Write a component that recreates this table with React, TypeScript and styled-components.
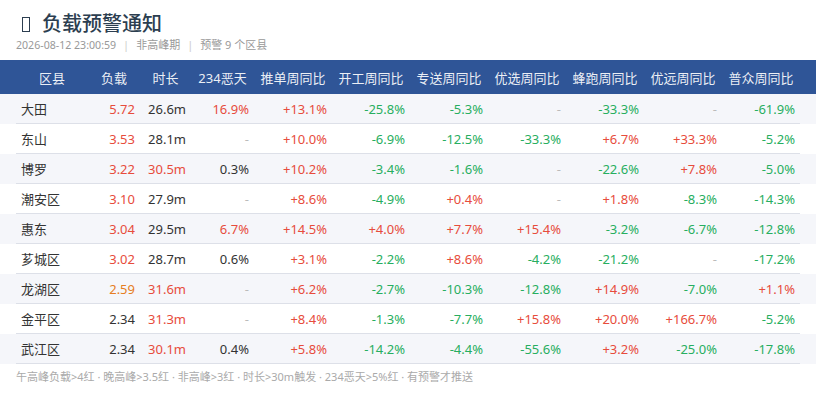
import React from 'react';
import styled, { createGlobalStyle } from 'styled-components';

const GlobalStyle = createGlobalStyle`
  * {
    box-sizing: border-box;
  }
  body {
    margin: 0;
    background: #ffffff;
    font-family: 'Noto Sans', 'Noto Sans CJK SC', sans-serif;
    color: #333333;
  }
`;

// column template shared by header and rows
const COLUMNS = '72px 52px 51px 63px repeat(7, 78px)';

const Page = styled.div`
  width: 816px;
  padding-top: 10px;
`;

const TitleBlock = styled.div`
  padding: 0 16px;
  margin-bottom: 8px;
`;

const Title = styled.h1`
  margin: 0;
  display: flex;
  align-items: center;
  gap: 12px;
  padding-left: 6px;
  font-size: 20px;
  line-height: 28px;
  font-weight: 500;
  color: #2c3e50;
`;

// missing-glyph box in front of the title
const TitleGlyph = styled.span`
  display: inline-block;
  width: 8px;
  height: 15px;
  border: 1.5px solid #2c3e50;
`;

const Meta = styled.div`
  display: flex;
  align-items: center;
  gap: 6px;
  font-size: 11px;
  line-height: 14px;
  color: #999999;
`;

const MetaDate = styled.span`
  font-size: 10.6px;
`;

const MetaSep = styled.span`
  color: #cccccc;
  padding: 0 1px;
`;

const HeadBar = styled.div`
  background: #2f5597;
  height: 34px;
`;

const Grid = styled.div`
  display: grid;
  grid-template-columns: ${COLUMNS};
  margin: 0 16px;
  height: 100%;
  align-items: center;
`;

const HeadCell = styled.div`
  text-align: center;
  font-size: 13px;
  color: rgba(255, 255, 255, 0.92);
  white-space: nowrap;
`;

const Row = styled.div<{ $striped: boolean }>`
  height: 30px;
  background: ${p => (p.$striped ? '#f5f6fa' : '#ffffff')};
`;

const RowGrid = styled(Grid)`
  border-bottom: 1px solid #dde0e8;
`;

type Tone = 'red' | 'green' | 'orange' | 'plain' | 'dash';

const toneColor: Record<Tone, string> = {
  red: '#e74c3c',
  green: '#27ae60',
  orange: '#e67e22',
  plain: '#333333',
  dash: '#bbbbbb',
};

const Cell = styled.div<{ $tone: Tone; $left?: boolean }>`
  padding: 0 5px;
  font-size: 13px;
  text-align: ${p => (p.$left ? 'left' : 'right')};
  color: ${p => toneColor[p.$tone]};
  white-space: nowrap;
`;

const Footer = styled.div`
  padding: 5px 16px 0;
  font-size: 11px;
  line-height: 16px;
  color: #aaaaaa;
`;

const headers = ['区县', '负载', '时长', '234恶天', '推单周同比', '开工周同比', '专送周同比', '优选周同比', '蜂跑周同比', '优远周同比', '普众周同比'];

type District = {
  name: string;
  load: number;
  minutes: number;
  bad: string;
  ratios: string[];
};

const districts: District[] = [
  { name: '大田', load: 5.72, minutes: 26.6, bad: '16.9%', ratios: ['+13.1%', '-25.8%', '-5.3%', '-', '-33.3%', '-', '-61.9%'] },
  { name: '东山', load: 3.53, minutes: 28.1, bad: '-', ratios: ['+10.0%', '-6.9%', '-12.5%', '-33.3%', '+6.7%', '+33.3%', '-5.2%'] },
  { name: '博罗', load: 3.22, minutes: 30.5, bad: '0.3%', ratios: ['+10.2%', '-3.4%', '-1.6%', '-', '-22.6%', '+7.8%', '-5.0%'] },
  { name: '潮安区', load: 3.1, minutes: 27.9, bad: '-', ratios: ['+8.6%', '-4.9%', '+0.4%', '-', '+1.8%', '-8.3%', '-14.3%'] },
  { name: '惠东', load: 3.04, minutes: 29.5, bad: '6.7%', ratios: ['+14.5%', '+4.0%', '+7.7%', '+15.4%', '-3.2%', '-6.7%', '-12.8%'] },
  { name: '芗城区', load: 3.02, minutes: 28.7, bad: '0.6%', ratios: ['+3.1%', '-2.2%', '+8.6%', '-4.2%', '-21.2%', '-', '-17.2%'] },
  { name: '龙湖区', load: 2.59, minutes: 31.6, bad: '-', ratios: ['+6.2%', '-2.7%', '-10.3%', '-12.8%', '+14.9%', '-7.0%', '+1.1%'] },
  { name: '金平区', load: 2.34, minutes: 31.3, bad: '-', ratios: ['+8.4%', '-1.3%', '-7.7%', '+15.8%', '+20.0%', '+166.7%', '-5.2%'] },
  { name: '武江区', load: 2.34, minutes: 30.1, bad: '0.4%', ratios: ['+5.8%', '-14.2%', '-4.4%', '-55.6%', '+3.2%', '-25.0%', '-17.8%'] },
];

const loadTone = (v: number): Tone => (v > 3 ? 'red' : v > 2.5 ? 'orange' : 'plain');
const minutesTone = (v: number): Tone => (v > 30 ? 'red' : 'plain');
const badTone = (v: string): Tone => (v === '-' ? 'dash' : parseFloat(v) > 5 ? 'red' : 'plain');
const ratioTone = (v: string): Tone => (v === '-' ? 'dash' : v.startsWith('+') ? 'red' : 'green');

const App: React.FC = () => {
  return (
    <Page>
      <GlobalStyle />
      <TitleBlock>
        <Title>
          <TitleGlyph />
          负载预警通知
        </Title>
        <Meta>
          <MetaDate>2026-08-12 23:00:59</MetaDate>
          <MetaSep>|</MetaSep>
          <span>非高峰期</span>
          <MetaSep>|</MetaSep>
          <span>预警 9 个区县</span>
        </Meta>
      </TitleBlock>

      <HeadBar>
        <Grid>
          {headers.map(h => (
            <HeadCell key={h}>{h}</HeadCell>
          ))}
        </Grid>
      </HeadBar>

      {districts.map((d, i) => (
        <Row key={d.name} $striped={i % 2 === 0}>
          <RowGrid>
            <Cell $tone="plain" $left>{d.name}</Cell>
            <Cell $tone={loadTone(d.load)}>{d.load.toFixed(2)}</Cell>
            <Cell $tone={minutesTone(d.minutes)}>{d.minutes.toFixed(1)}m</Cell>
            <Cell $tone={badTone(d.bad)}>{d.bad}</Cell>
            {d.ratios.map((r, j) => (
              <Cell key={j} $tone={ratioTone(r)}>{r}</Cell>
            ))}
          </RowGrid>
        </Row>
      ))}

      <Footer>
        午高峰负载&gt;4红 · 晚高峰&gt;3.5红 · 非高峰&gt;3红 · 时长&gt;30m触发 · 234恶天&gt;5%红 · 有预警才推送
      </Footer>
    </Page>
  );
};

export default App;
